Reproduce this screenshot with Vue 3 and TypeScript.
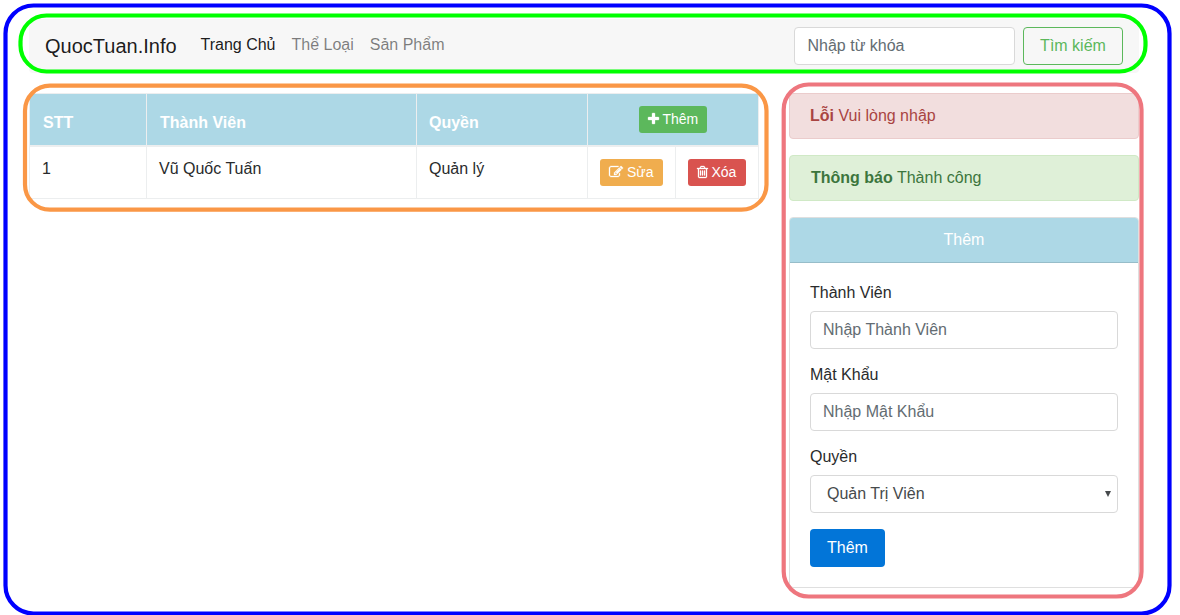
<script setup lang="ts">
import { ref } from 'vue'

interface NavLink {
  label: string
  active: boolean
}

interface Frame {
  name: string
  x: number
  y: number
  width: number
  height: number
  radius: number
}

const links: NavLink[] = [
  { label: 'Trang Chủ', active: true },
  { label: 'Thể Loại', active: false },
  { label: 'Sản Phẩm', active: false },
]

const frames: Frame[] = [
  { name: 'frame-page', x: 5.5, y: 5.5, width: 1164, height: 608, radius: 28 },
  { name: 'frame-header', x: 20.5, y: 15.5, width: 1125, height: 56, radius: 26 },
  { name: 'frame-list', x: 25, y: 85.7, width: 741.5, height: 124, radius: 25 },
  { name: 'frame-side', x: 783.7, y: 84.5, width: 357.8, height: 512, radius: 25 },
]

const keyword = ref('')
const member = ref('')
const password = ref('')
const role = ref('Quản Trị Viên')
</script>

<template>
  <div class="page">
    <nav class="navbar">
      <a class="brand">QuocTuan.Info</a>
      <ul class="links">
        <li v-for="link in links" :key="link.label" :class="{ active: link.active }">{{ link.label }}</li>
      </ul>
      <input v-model="keyword" class="control search" type="text" placeholder="Nhập từ khóa" />
      <button class="btn outline" type="button">Tìm kiếm</button>
    </nav>

    <main class="content">
      <section class="table">
        <div class="th shifted">STT</div>
        <div class="th shifted">Thành Viên</div>
        <div class="th">Quyền</div>
        <div class="th actions">
          <button class="btn-sm green" type="button">
            <svg class="icon narrow" viewBox="192 0 1408 1792"><path d="M1600 736v192q0 40-28 68t-68 28h-416v416q0 40-28 68t-68 28h-192q-40 0-68-28t-28-68v-416h-416q-40 0-68-28t-28-68v-192q0-40 28-68t68-28h416v-416q0-40 28-68t68-28h192q40 0 68 28t28 68v416h416q40 0 68 28t28 68z" /></svg>
            <span>Thêm</span>
          </button>
        </div>
        <div class="td">1</div>
        <div class="td">Vũ Quốc Tuấn</div>
        <div class="td">Quản lý</div>
        <div class="td">
          <button class="btn-sm orange" type="button">
            <svg class="icon" viewBox="0 0 1792 1792"><path d="M888 1184l116-116-152-152-116 116v56h96v96h56zm440-720q-16-16-33 1l-350 350q-17 17-1 33t33-1l350-350q17-17 1-33zm80 594v190q0 119-84.5 203.5t-203.5 84.5h-832q-119 0-203.5-84.5t-84.5-203.5v-832q0-119 84.5-203.5t203.5-84.5h832q63 0 117 25 15 7 18 23 3 17-9 29l-49 49q-14 14-32 8-23-6-45-6h-832q-66 0-113 47t-47 113v832q0 66 47 113t113 47h832q66 0 113-47t47-113v-126q0-13 9-22l64-64q15-15 35-7t20 29zm-96-738l288 288-672 672h-288v-288zm444 132l-92 92-288-288 92-92q28-28 68-28t68 28l152 152q28 28 28 68t-28 68z" /></svg>
            <span>Sửa</span>
          </button>
        </div>
        <div class="td">
          <button class="btn-sm red" type="button">
            <svg class="icon narrow" viewBox="192 0 1408 1792"><path d="M704 736v576q0 14-9 23t-23 9h-64q-14 0-23-9t-9-23v-576q0-14 9-23t23-9h64q14 0 23 9t9 23zm256 0v576q0 14-9 23t-23 9h-64q-14 0-23-9t-9-23v-576q0-14 9-23t23-9h64q14 0 23 9t9 23zm256 0v576q0 14-9 23t-23 9h-64q-14 0-23-9t-9-23v-576q0-14 9-23t23-9h64q14 0 23 9t9 23zm128 724v-948h-896v948q0 22 7 40.5t14.5 27 10.5 8.5h832q3 0 10.5-8.5t14.5-27 7-40.5zm-672-1076h448l-48-117q-7-9-17-11h-317q-10 2-17 11zm928 32v64q0 14-9 23t-23 9h-96v948q0 83-47 143.5t-113 60.5h-832q-66 0-113-58.5t-47-141.5v-952h-96q-14 0-23-9t-9-23v-64q0-14 9-23t23-9h309l70-167q15-37 54-63t79-26h320q40 0 79 26t54 63l70 167h309q14 0 23 9t9 23z" /></svg>
            <span>Xóa</span>
          </button>
        </div>
      </section>

      <aside class="side">
        <div class="alert danger"><strong>Lỗi</strong> Vui lòng nhập</div>
        <div class="alert success"><strong>Thông báo</strong> Thành công</div>
        <form class="card" @submit.prevent>
          <div class="card-header">Thêm</div>
          <div class="card-block">
            <label for="member">Thành Viên</label>
            <input id="member" v-model="member" class="control" type="text" placeholder="Nhập Thành Viên" />
            <label for="password">Mật Khẩu</label>
            <input id="password" v-model="password" class="control" type="password" placeholder="Nhập Mật Khẩu" />
            <label for="role">Quyền</label>
            <div class="select">
              <select id="role" v-model="role" class="control">
                <option>Quản Trị Viên</option>
              </select>
              <svg class="arrow" viewBox="0 0 6 6"><path d="M0 0h6L3 6z" /></svg>
            </div>
            <button class="btn primary" type="submit">Thêm</button>
          </div>
        </form>
      </aside>
    </main>

    <svg class="frames" viewBox="0 0 1180 615" aria-hidden="true">
      <rect
        v-for="f in frames"
        :key="f.name"
        :class="f.name"
        :x="f.x"
        :y="f.y"
        :width="f.width"
        :height="f.height"
        :rx="f.radius"
      />
    </svg>
  </div>
</template>

<style>
body {
  background: #fff;
}
</style>

<style scoped>
.page {
  position: relative;
  box-sizing: border-box;
  width: 1180px;
  height: 615px;
  overflow: hidden;
  padding: 19px 41px 0 29px;
  font: 16px/24px "Liberation Sans", Arial, sans-serif;
  color: #292b2c;
}
.page * {
  box-sizing: border-box;
}
button,
input,
select {
  margin: 0;
  font-family: inherit;
}
.navbar {
  display: flex;
  align-items: center;
  height: 54px;
  padding: 0 16px;
  background: #f7f7f7;
  border-radius: 4px;
}
.brand {
  width: 155.5px;
  font-size: 20px;
  line-height: 30px;
  color: rgba(0, 0, 0, 0.9);
  white-space: nowrap;
}
.links {
  display: flex;
  gap: 16px;
  flex: 1;
  margin: 0;
  padding: 0 0 2px;
  list-style: none;
  color: rgba(0, 0, 0, 0.5);
  white-space: nowrap;
}
.links .active {
  color: rgba(0, 0, 0, 0.9);
}
.control {
  display: block;
  width: 100%;
  height: 38px;
  padding: 0 12px;
  border: 1px solid #d9d9d9;
  border-radius: 4px;
  background: #fff;
  color: #464a4c;
  font-size: 16px;
  outline: none;
}
.control::placeholder {
  color: #636c72;
  opacity: 1;
}
.search {
  width: 221px;
  margin-right: 8px;
  padding-left: 12.5px;
}
.btn {
  height: 38px;
  padding: 0 16px;
  border: 1px solid transparent;
  border-radius: 4px;
  font-size: 16px;
  white-space: nowrap;
}
.outline {
  width: 100px;
  border-color: #5cb85c;
  background: transparent;
  color: #5cb85c;
}
.primary {
  width: 75px;
  background: #0275d8;
  color: #fff;
}
.content {
  display: flex;
  justify-content: space-between;
  align-items: flex-start;
  padding-top: 20px;
}
.table {
  display: grid;
  grid-template-columns: 117px 270px 171px 88px 83px;
  grid-template-rows: 53px 52px;
  width: 730px;
  border-left: 1px solid #eceeef;
  border-top: 1px solid #eceeef;
}
.th,
.td {
  border-right: 1px solid #eceeef;
  border-bottom: 1px solid #eceeef;
}
.th {
  padding: 17px 12px 0;
  border-bottom-width: 2px;
  background: #add8e6;
  color: #fff;
  font-weight: bold;
}
.th.shifted {
  padding-left: 13px;
}
.th.actions {
  grid-column: span 2;
  padding: 12px 0 0;
  text-align: center;
}
.td {
  padding: 10px 12px 0;
}
.btn-sm {
  display: inline-flex;
  align-items: center;
  height: 27px;
  margin-top: 2px;
  padding: 0 8px 1px 8.5px;
  border: 0;
  border-radius: 3px;
  color: #fff;
  font-size: 14px;
  gap: 4px;
  white-space: nowrap;
  vertical-align: top;
}
.th .btn-sm {
  margin-top: 0;
}
.green {
  width: 68px;
  background: #5cb85c;
}
.orange {
  width: 63px;
  padding-left: 9px;
  background: #f0ad4e;
}
.red {
  width: 58px;
  background: #d9534f;
}
.icon {
  flex: none;
  width: 14px;
  height: 14px;
  fill: #fff;
  stroke: #fff;
  stroke-width: 40;
  overflow: visible;
}
.icon.narrow {
  width: 11px;
}
.side {
  width: 350px;
}
.alert {
  height: 46px;
  margin-bottom: 16px;
  padding: 10px 20px;
  border: 1px solid;
  border-radius: 4px;
}
.danger {
  background: #f2dede;
  border-color: #ebcccc;
  color: #a94442;
}
.success {
  padding-left: 21px;
  background: #dff0d8;
  border-color: #d0e9c6;
  color: #3c763d;
}
.card {
  height: 371px;
  border: 1px solid #dfdfdf;
  border-radius: 4px;
  background: #fff;
}
.card-header {
  height: 45px;
  padding-top: 10px;
  border-bottom: 1px solid #97bdc9;
  border-radius: 3px 3px 0 0;
  background: #add8e6;
  color: #fff;
  text-align: center;
}
.card-block {
  padding: 20px;
}
label {
  display: block;
  height: 20px;
  margin-bottom: 8px;
  line-height: 19px;
}
.card-block .control {
  margin-bottom: 16px;
}
.select {
  position: relative;
}
.select .control {
  appearance: none;
  padding: 0 16px 2px;
}
.arrow {
  position: absolute;
  top: 16px;
  right: 7px;
  width: 6px;
  height: 6px;
  fill: #464a4c;
}
.frames {
  position: absolute;
  inset: 0;
  width: 1180px;
  height: 615px;
  fill: none;
  stroke-width: 4.2;
  pointer-events: none;
}
.frame-page {
  stroke: #00f;
}
.frame-header {
  stroke: #0f0;
}
.frame-list {
  stroke: #fa9746;
}
.frame-side {
  stroke: #ee767e;
}
</style>
